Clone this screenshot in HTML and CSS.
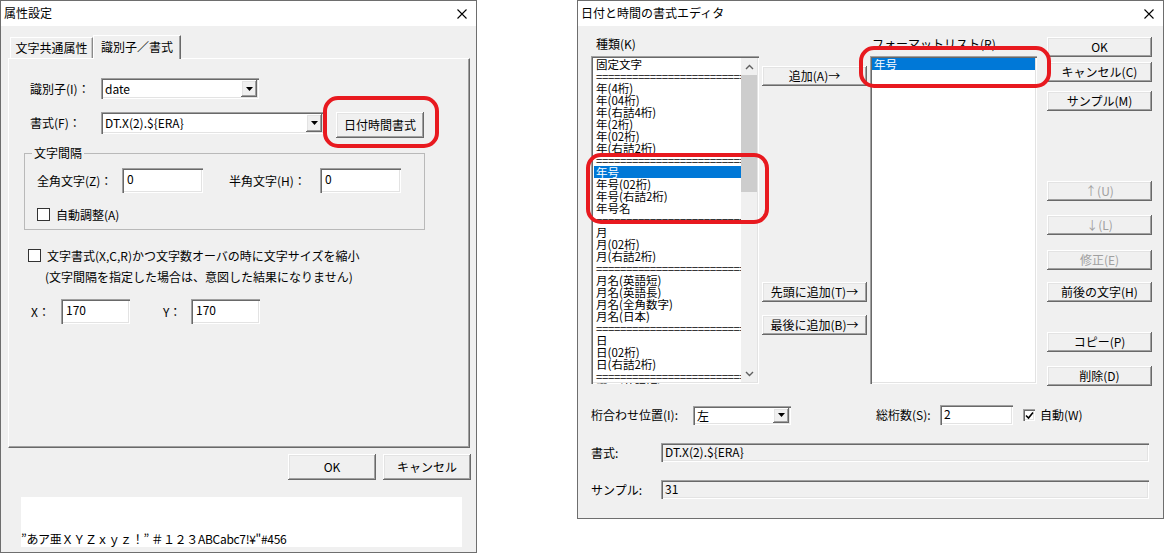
FILE: index.html
```html
<!DOCTYPE html>
<html lang="ja">
<head>
<meta charset="utf-8">
<title>属性設定</title>
<link rel="stylesheet" href="styles.css">
</head>
<body>
<div class="screen">
  <div class="dlg dlg-left">
    <div class="titlebar"><span class="title">属性設定</span><svg class="close" width="10" height="10" viewBox="0 0 10 10"><path d="M0.5 0.5L9.5 9.5M9.5 0.5L0.5 9.5" stroke="#000" stroke-width="1.1"/></svg></div>
    <div class="lbody">
      <div class="tabs">
        <div class="tab">文字共通属性</div>
        <div class="tab active">識別子／書式</div>
      </div>
      <div class="panel">
        <div class="row r1">
          <span class="lbl w71">識別子(I)：</span>
          <div class="combo c1 sunken"><span class="ctext">date</span><span class="ddbtn raised"><svg width="7" height="4" viewBox="0 0 7 4"><path d="M0 0h7L3.5 4z" fill="#000"/></svg></span></div>
        </div>
        <div class="row r2">
          <span class="lbl w71 lh22">書式(F)：</span>
          <div class="combo c2 sunken"><span class="ctext">DT.X(2).${ERA}</span><span class="ddbtn raised"><svg width="7" height="4" viewBox="0 0 7 4"><path d="M0 0h7L3.5 4z" fill="#000"/></svg></span></div>
          <div class="btn raised dtbtn">日付時間書式</div>
        </div>
        <fieldset class="group">
          <legend>文字間隔</legend>
          <div class="row g1">
            <span class="lbl w85">全角文字(Z)：</span>
            <div class="input sunken w81">0</div>
            <span class="lbl w91 ml26">半角文字(H)：</span>
            <div class="input sunken w81">0</div>
          </div>
          <div class="row g2">
            <span class="chk"></span><span class="chktext">自動調整(A)</span>
          </div>
        </fieldset>
        <div class="row chk2">
          <span class="chk"></span><span class="chktext">文字書式(X,C,R)かつ文字数オーバの時に文字サイズを縮小</span>
        </div>
        <div class="note">(文字間隔を指定した場合は、意図した結果になりません)</div>
        <div class="row xy">
          <span class="lbl w30">X：</span>
          <div class="input sunken w69">170</div>
          <span class="lbl w28 ml33">Y：</span>
          <div class="input sunken w69">170</div>
        </div>
      </div>
      <div class="btnrow">
        <div class="btn raised okbtn">OK</div>
        <div class="btn raised okbtn">キャンセル</div>
      </div>
      <div class="preview">”あア亜ＸＹＺｘｙｚ！” ＃１２３ABCabc7!¥"#456</div>
    </div>
  </div>

  <div class="dlg dlg-right">
    <div class="titlebar"><span class="title">日付と時間の書式エディタ</span><svg class="close" width="10" height="10" viewBox="0 0 10 10"><path d="M0.5 0.5L9.5 9.5M9.5 0.5L0.5 9.5" stroke="#000" stroke-width="1.1"/></svg></div>
    <div class="rbody">
      <div class="top">
        <div class="col1">
          <div class="clabel">種類(K)</div>
          <div class="list sunken">
            <div class="items">
              <div class="it">固定文字</div>
              <div class="it sep">=========================</div>
              <div class="it">年(4桁)</div>
              <div class="it">年(04桁)</div>
              <div class="it">年(右詰4桁)</div>
              <div class="it">年(2桁)</div>
              <div class="it">年(02桁)</div>
              <div class="it">年(右詰2桁)</div>
              <div class="it sep">=========================</div>
              <div class="it sel">年号</div>
              <div class="it">年号(02桁)</div>
              <div class="it">年号(右詰2桁)</div>
              <div class="it">年号名</div>
              <div class="it sep">=========================</div>
              <div class="it">月</div>
              <div class="it">月(02桁)</div>
              <div class="it">月(右詰2桁)</div>
              <div class="it sep">=========================</div>
              <div class="it">月名(英語短)</div>
              <div class="it">月名(英語長)</div>
              <div class="it">月名(全角数字)</div>
              <div class="it">月名(日本)</div>
              <div class="it sep">=========================</div>
              <div class="it">日</div>
              <div class="it">日(02桁)</div>
              <div class="it">日(右詰2桁)</div>
              <div class="it sep">=========================</div>
              <div class="it last">曜日(英語短)</div>
            </div>
            <div class="sbar">
              <div class="sarrow"><svg width="9" height="6" viewBox="0 0 9 6"><path d="M1 5L4.5 1.5L8 5" stroke="#606060" stroke-width="1.4" fill="none"/></svg></div>
              <div class="sthumb"></div>
              <div class="strack"></div>
              <div class="sarrow"><svg width="9" height="6" viewBox="0 0 9 6"><path d="M1 1L4.5 4.5L8 1" stroke="#606060" stroke-width="1.4" fill="none"/></svg></div>
            </div>
          </div>
        </div>
        <div class="col2">
          <div class="btn raised rb b-add">追加(A)→</div>
          <div class="btn raised rb b-head">先頭に追加(T)→</div>
          <div class="btn raised rb b-tail">最後に追加(B)→</div>
        </div>
        <div class="col3">
          <div class="clabel cl3">フォーマットリスト(R)</div>
          <div class="list sunken">
            <div class="items full">
              <div class="it sel">年号</div>
            </div>
          </div>
        </div>
        <div class="col4">
          <div class="btn raised rb m0">OK</div>
          <div class="btn raised rb m5">キャンセル(C)</div>
          <div class="btn raised rb m9">サンプル(M)</div>
          <div class="btn raised rb m70 dis">↑(U)</div>
          <div class="btn raised rb m14 dis">↓(L)</div>
          <div class="btn raised rb m15 dis">修正(E)</div>
          <div class="btn raised rb m12">前後の文字(H)</div>
          <div class="btn raised rb m30">コピー(P)</div>
          <div class="btn raised rb m14">削除(D)</div>
        </div>
      </div>
      <div class="brow ba">
        <span class="rl w102">桁合わせ位置(I):</span>
        <div class="combo rc sunken"><span class="ctext">左</span><span class="ddbtn raised"><svg width="7" height="4" viewBox="0 0 7 4"><path d="M0 0h7L3.5 4z" fill="#000"/></svg></span></div>
        <span class="rl w64 ml85">総桁数(S):</span>
        <div class="input sunken rin">2</div>
        <span class="rchk sunken"><svg width="9" height="9" viewBox="0 0 9 9"><path d="M1 4.5L3.5 7L8 1.5" stroke="#000" stroke-width="1.6" fill="none"/></svg></span>
        <span class="rl ml5">自動(W)</span>
      </div>
      <div class="brow bb">
        <span class="rl w70">書式:</span>
        <div class="field sunken">DT.X(2).${ERA}</div>
      </div>
      <div class="brow bc">
        <span class="rl w70">サンプル:</span>
        <div class="field sunken">31</div>
      </div>
    </div>
  </div>

  <div class="redmark m-left"></div>
  <div class="redmark m-list"></div>
  <div class="redmark m-fmt"></div>
</div>
</body>
</html>
```

FILE: styles.css
```css
* { box-sizing: border-box; }
html, body { margin: 0; padding: 0; background: #fff; }
body {
  font-family: "Noto Sans CJK JP", "Noto Sans", sans-serif;
  font-size: 12px;
  line-height: 16px;
  color: #000;
}
.screen {
  position: relative;
  display: flex;
  align-items: flex-start;
  width: 1166px;
  height: 553px;
  overflow: hidden;
}
.dlg {
  background: #f0f0f0;
  border: 1px solid #6e6e6e;
  display: flex;
  flex-direction: column;
}
.dlg-left { width: 477px; height: 553px; }
.dlg-right { width: 587px; height: 519px; margin-left: 100px; }

.titlebar {
  height: 25px;
  background: #fff;
  display: flex;
  align-items: center;
  justify-content: space-between;
  padding: 0 9px 0 3px;
  flex: none;
}
.title { font-size: 12px; line-height: 16px; margin-top: -1px; }
.close { display: block; }

/* 3D styles */
.raised {
  background: #f0f0f0;
  box-shadow: inset -1px -1px #696969, inset 1px 1px #ffffff, inset -2px -2px #a0a0a0, inset 2px 2px #e3e3e3;
}
.sunken {
  box-shadow: inset 1px 1px #a0a0a0, inset 2px 2px #696969, inset -1px -1px #ffffff, inset -2px -2px #e3e3e3;
}
.btn {
  display: flex;
  align-items: center;
  justify-content: center;
  white-space: nowrap;
}

/* left dialog */
.lbody { padding: 9px 5px 0 7px; display: flex; flex-direction: column; }
.tabs {
  display: flex;
  align-items: flex-end;
  margin-left: 2px;
  height: 23px;
  position: relative;
  z-index: 1;
}
.tab {
  width: 83px;
  height: 21px;
  line-height: 20px;
  text-align: center;
  border-top: 1px solid #fff;
  border-left: 1px solid #fff;
  border-right: 1px solid #8a8a8a;
  background: #f0f0f0;
  box-shadow: inset -1px 0 #c8c8c8;
}
.tab.active {
  width: 88px;
  height: 24px;
  margin-bottom: -1px;
  line-height: 22px;
  border-right: 1px solid #696969;
  box-shadow: inset -1px 0 #a0a0a0;
}
.panel {
  width: 462px;
  height: 390px;
  border-top: 1px solid #fff;
  border-left: 1px solid #fff;
  border-right: 1px solid #696969;
  border-bottom: 1px solid #696969;
  box-shadow: inset -1px -1px #a0a0a0;
  padding: 19px 0 0 15px;
  display: flex;
  flex-direction: column;
}
.row { display: flex; align-items: center; }
.lbl { display: inline-block; white-space: nowrap; flex: none; }
.w71 { width: 71px; }
.w85 { width: 85px; }
.w91 { width: 91px; }
.w30 { width: 30px; }
.w28 { width: 28px; }
.ml26 { margin-left: 26px; }
.ml33 { margin-left: 33px; }
.lh22 { line-height: 22px; }

.r1 { height: 21px; padding-left: 6px; }
.r2 { height: 26px; padding-left: 6px; margin-top: 13px; align-items: flex-start; }

.combo {
  background: #fff;
  display: flex;
  align-items: stretch;
  padding: 2px;
  flex: none;
}
.c1 { width: 158px; height: 21px; }
.c2 { width: 223px; height: 22px; }
.ctext { flex: 1; padding-left: 2px; line-height: 17px; white-space: nowrap; overflow: hidden; }
.c2 .ctext { line-height: 18px; }
.ddbtn {
  width: 16px;
  display: flex;
  align-items: center;
  justify-content: center;
}
.dtbtn { width: 88px; height: 26px; margin-left: 12px; }

.group {
  margin: 7px 0 0 0;
  padding: 0 0 0 12px;
  width: 401px;
  height: 85px;
  border: 1px solid #b9b9b9;
  min-width: 0;
}
.group legend {
  padding: 0 2px;
  margin-left: -5px;
  line-height: 16px;
  font-size: 12px;
}
.g1 { margin-top: 7px; height: 25px; }
.input {
  background: #fff;
  height: 25px;
  padding: 3px 0 0 5px;
  line-height: 16px;
  flex: none;
}
.w81 { width: 81px; }
.w69 { width: 69px; }
.g2 { margin-top: 15px; height: 13px; }
.chk {
  width: 13px;
  height: 13px;
  border: 1px solid #333;
  background: #fff;
  flex: none;
}
.chktext { margin-left: 6px; white-space: nowrap; }
.chk2 { margin-top: 19px; height: 13px; padding-left: 4px; }
.note { margin-top: 7px; padding-left: 21px; line-height: 16px; white-space: nowrap; }
.xy { margin-top: 14px; height: 25px; padding-left: 7px; }

.btnrow {
  display: flex;
  justify-content: flex-end;
  gap: 7px;
  margin-top: 6px;
}
.okbtn { width: 88px; height: 26px; }
.preview {
  margin: 17px 0 0 13px;
  width: 441px;
  height: 50px;
  background: #fff;
  padding-top: 35px;
  line-height: 14px;
  font-size: 12px;
  font-family: "Noto Sans CJK JP", "DejaVu Sans", sans-serif;
  white-space: nowrap;
  letter-spacing: -0.3px;
}

/* right dialog */
.rbody { padding: 11px 0 0 13px; display: flex; flex-direction: column; }
.top { display: flex; align-items: flex-start; height: 349px; }
.col1 { width: 168px; flex: none; }
.col2 { width: 105px; margin-left: 3px; flex: none; display: flex; flex-direction: column; }
.col3 { width: 167px; margin-left: 3px; flex: none; }
.col4 { width: 105px; margin-left: 10px; flex: none; display: flex; flex-direction: column; }
.clabel { height: 19px; line-height: 14px; padding-left: 5px; white-space: nowrap; }
.cl3 { padding-left: 2px; }
.list {
  height: 328px;
  background: #fff;
  padding: 2px;
  display: flex;
  overflow: hidden;
}
.items { width: 148px; padding-left: 1px; flex: none; }
.items.full { width: 100%; padding-left: 0; }
.it {
  height: 12px;
  line-height: 12px;
  padding-left: 2px;
  white-space: nowrap;
  font-size: 11.5px;
}
.it.sep { letter-spacing: -0.4px; overflow: hidden; }
.it.last { height: 8px; overflow: hidden; }
.it.sel { background: #0078d7; color: #fff; }
.sbar {
  width: 16px;
  display: flex;
  flex-direction: column;
  background: #f0f0f0;
  flex: none;
}
.sarrow { height: 17px; display: flex; align-items: center; justify-content: center; flex: none; }
.sthumb { height: 117px; background: #cdcdcd; flex: none; }
.strack { flex: 1; }

.rb { width: 105px; height: 20px; flex: none; }
.b-add { margin-top: 29px; }
.b-head { margin-top: 196px; }
.b-tail { margin-top: 13px; }
.m0 { margin-top: 0; }
.m5 { margin-top: 5px; }
.m9 { margin-top: 9px; }
.m70 { margin-top: 70px; }
.m14 { margin-top: 14px; }
.m15 { margin-top: 15px; }
.m12 { margin-top: 12px; }
.m30 { margin-top: 30px; }
.dis { color: #a0a0a0; }

.brow { display: flex; align-items: center; }
.ba { margin-top: 19px; height: 20px; }
.bb { margin-top: 18px; height: 19px; }
.bc { margin-top: 18px; height: 19px; }
.rl { white-space: nowrap; flex: none; }
.w102 { width: 102px; }
.w64 { width: 64px; }
.w70 { width: 70px; }
.ml85 { margin-left: 85px; }
.ml5 { margin-left: 5px; }
.rc { width: 98px; height: 19px; }
.rc .ctext { line-height: 15px; }
.rin { width: 73px; height: 20px; padding: 2px 0 0 4px; line-height: 14px; }
.rchk {
  width: 12px;
  height: 12px;
  margin-left: 10px;
  background: #fff;
  display: flex;
  align-items: center;
  justify-content: center;
  flex: none;
}
.field {
  width: 488px;
  height: 19px;
  background: #f0f0f0;
  padding: 2px 0 0 4px;
  line-height: 14px;
  white-space: nowrap;
}

/* red annotation marks (overlay) */
.redmark {
  position: absolute;
  border: 4px solid #e8191f;
  border-radius: 15px;
  pointer-events: none;
}
.m-left { left: 323px; top: 96px; width: 116px; height: 52px; }
.m-list { left: 586px; top: 153px; width: 183px; height: 71px; }
.m-fmt { left: 859px; top: 46px; width: 192px; height: 42px; }
```
